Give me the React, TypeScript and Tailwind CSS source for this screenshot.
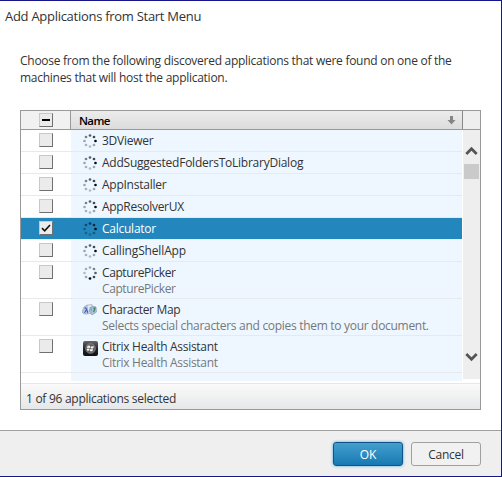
type IconKind = 'spinner' | 'charmap' | 'citrix';

interface AppRow {
  name: string;
  detail?: string;
  icon: IconKind;
  phase?: number;
  selected?: boolean;
  track: string;
  detailTrack?: string;
}

const rows: AppRow[] = [
  { name: '3DViewer', icon: 'spinner', track: 'tracking-[-0.25px]' },
  { name: 'AddSuggestedFoldersToLibraryDialog', icon: 'spinner', track: 'tracking-[-0.24px]' },
  { name: 'AppInstaller', icon: 'spinner', track: 'tracking-[-0.25px]' },
  { name: 'AppResolverUX', icon: 'spinner', track: 'tracking-[-0.3px]' },
  { name: 'Calculator', icon: 'spinner', selected: true, track: 'tracking-[-0.25px]' },
  { name: 'CallingShellApp', icon: 'spinner', track: 'tracking-[-0.15px]' },
  { name: 'CapturePicker', detail: 'CapturePicker', icon: 'spinner', phase: 2, track: 'tracking-[-0.4px]', detailTrack: 'tracking-[-0.4px]' },
  { name: 'Character Map', detail: 'Selects special characters and copies them to your document.', icon: 'charmap', track: 'tracking-[-0.35px]', detailTrack: 'tracking-[-0.3px]' },
  { name: 'Citrix Health Assistant', detail: 'Citrix Health Assistant', icon: 'citrix', track: 'tracking-[-0.3px]', detailTrack: 'tracking-[-0.3px]' },
];

const dots = [
  { x: 12.5, y: 7, o: 1 },
  { x: 11, y: 3, o: 0.75 },
  { x: 7, y: 1.5, o: 0.65 },
  { x: 3, y: 3, o: 0.5 },
  { x: 1.5, y: 7, o: 0.35 },
  { x: 3, y: 11, o: 0.3 },
  { x: 7, y: 12.5, o: 0.25 },
  { x: 11, y: 11, o: 0.35 },
];

function Spinner({ phase = 0 }: { phase?: number }) {
  return (
    <svg width="14" height="14" viewBox="0 0 14 14">
      {dots.map((d, i) => (
        <circle key={i} cx={d.x} cy={d.y} r="1.35" fill="#050a14" opacity={dots[(i + phase) % 8].o} />
      ))}
    </svg>
  );
}

function CharMapIcon() {
  return (
    <svg className="mt-px" width="15" height="12" viewBox="0 0 15 12">
      <path d="M2 3 L5 1 L7 4 L6 10 L2 10 L0 8Z" fill="#b4c6dd" stroke="#92a5bf" strokeWidth=".6" />
      <path d="M5 1 L10 0.6 L11 8 L6 10Z" fill="#e0eaf5" stroke="#90a2bd" strokeWidth=".6" />
      <path d="M10 2 L14 3 L14.5 8 L10 11 L8 9Z" fill="#a9bfd6" stroke="#8497b3" strokeWidth=".6" />
      <path d="M2.5 4 L4 4 L5.8 8.8 M4.2 6 L2.6 8.8" stroke="#3345a8" strokeWidth="1" fill="none" />
      <path d="M7 8 L8.5 3 L9.5 7" stroke="#7c96c8" strokeWidth=".9" fill="none" />
      <path d="M11.2 4 L13 4 L11.6 8" stroke="#338a55" strokeWidth="1.2" fill="none" />
    </svg>
  );
}

function CitrixIcon() {
  return (
    <svg className="mt-px ml-px shrink-0" width="15" height="15" viewBox="0 0 15 15">
      <defs>
        <linearGradient id="tile" x1="0" y1="0" x2="0" y2="1">
          <stop offset="0" stopColor="#686868" />
          <stop offset=".5" stopColor="#262626" />
          <stop offset="1" stopColor="#111" />
        </linearGradient>
      </defs>
      <rect width="15" height="15" rx="2" fill="url(#tile)" />
      <circle cx="7.5" cy="7.5" r="4.8" fill="#5c5c5c" stroke="#999" strokeWidth=".7" />
      <path d="M4.5 5 Q6 4.2 7.2 4.9 L6.8 7 Q5.5 6.4 4 7Z M7.9 5.2 Q9.3 5.8 10.8 5.1 L10.3 7.2 Q8.8 7.9 7.5 7.2Z M3.9 7.7 Q5.3 7.1 6.6 7.8 L6.2 9.8 Q5 9.2 4 9.7Z M7.3 8 Q8.7 8.6 10.1 7.9 L9.6 10 Q8.2 10.7 6.9 10Z" fill="#f5f5f5" />
    </svg>
  );
}

function CheckBox({ state }: { state: 'off' | 'on' | 'mixed' }) {
  return (
    <span className="flex size-[14px] items-center justify-center border border-t-[#c9c9c9] border-r-[#707070] border-b-[#707070] border-l-[#c9c9c9] bg-[#ebebeb]">
      {state === 'mixed' && <span className="h-[2px] w-2 bg-black" />}
      {state === 'on' && (
        <svg width="10" height="10" viewBox="0 0 10 10">
          <path d="M1 5.2 L3.7 7.8 L9 2" fill="none" stroke="#111" strokeWidth="1.6" />
        </svg>
      )}
    </span>
  );
}

function Row({ row }: { row: AppRow }) {
  const size = row.detail ? 'h-[37px]' : 'h-[22px]';
  const tone = row.selected ? 'border-[#e9edf0] bg-[#2386bd] text-white' : 'border-[#e6eaed] text-[#333]';
  return (
    <div className={`flex border-b ${size} ${tone}`}>
      <div className="flex w-[50px] shrink-0 justify-center pt-[3px]">
        <CheckBox state={row.selected ? 'on' : 'off'} />
      </div>
      <div className={`flex grow ${row.selected ? '' : 'bg-[#eef7ff]'}`}>
        <div className="flex w-[31px] shrink-0 items-start justify-center pt-1 pl-[6px]">
          {row.icon === 'spinner' && <Spinner phase={row.phase} />}
          {row.icon === 'charmap' && <CharMapIcon />}
          {row.icon === 'citrix' && <CitrixIcon />}
        </div>
        <div className="pt-[3px] leading-4 whitespace-nowrap">
          <div><span className={row.track}>{row.name}</span></div>
          {row.detail && <div className="text-[#777]"><span className={row.detailTrack}>{row.detail}</span></div>}
        </div>
      </div>
    </div>
  );
}

export default function App() {
  return (
    <div className="flex h-[477px] w-[502px] flex-col border-t border-r border-b border-[#17178b] bg-white font-['Open_Sans','Noto_Sans',sans-serif] text-[12px] text-[#333]">
      <h1 className="h-[51px] pt-[5px] pl-[5px] text-[13px] leading-5 tracking-[-0.28px] whitespace-nowrap"><span>Add Applications from Start Menu</span></h1>
      <p className="h-[58px] pl-5 leading-[17px] tracking-[-0.27px] whitespace-nowrap">
        <span>Choose from the following discovered applications that were found on one of the</span><br />
        <span>machines that will host the application.</span>
      </p>
      <div className="ml-5 flex h-[300px] w-[461px] flex-col border border-[#999]">
        <div className="flex h-[19px] shrink-0 border-b border-[#999]">
          <div className="flex w-[50px] justify-center border-r border-[#999] bg-[#f1f1f1] pt-[2px]">
            <CheckBox state="mixed" />
          </div>
          <div className="flex w-[391px] items-center justify-between bg-linear-to-b from-[#ececec] to-[#dcdcdc] pr-[6px] pl-2">
            <span className="pt-px text-[11.5px] font-semibold tracking-[-0.65px] text-black">Name</span>
            <svg width="9" height="9" viewBox="0 0 9 9">
              <path d="M3 0H6V4H8.5L4.5 8.5L.5 4H3Z" fill="#858585" />
            </svg>
          </div>
          <div className="grow border-l border-[#888] bg-[#eee]" />
        </div>
        <div className="flex h-[253px] shrink-0">
          <div className="flex w-[441px] flex-col">
            {rows.map((row) => <Row key={row.name} row={row} />)}
            <div className="h-2 pl-[50px]"><div className="h-full bg-[#eef7ff]" /></div>
          </div>
          <div className="ml-px flex h-[249px] w-[17px] flex-col items-center bg-[#eee] pt-[16px]">
            <svg width="13" height="10" viewBox="0 0 13 10"><path d="M1.3 8 L6.5 2.7 L11.7 8" fill="none" stroke="#555" strokeWidth="2.7" /></svg>
            <div className="mt-[8px] h-[15px] w-[15px] bg-[#cacaca]" />
            <svg className="mt-auto mb-[17px]" width="13" height="10" viewBox="0 0 13 10"><path d="M1.3 2 L6.5 7.3 L11.7 2" fill="none" stroke="#555" strokeWidth="2.7" /></svg>
          </div>
        </div>
        <div className="grow border-t border-[#e5e7e9] bg-linear-to-b from-[#fafafa] to-[#e6e7e9] pt-[6px] pl-[5px] leading-[18px] tracking-[-0.28px]"><span>1 of 96 applications selected</span></div>
      </div>
      <div className="mt-5 flex grow items-start justify-end gap-[8px] border-t border-[#a0a0a0] bg-[#efefef] pt-[11px] pr-[20px]">
        <button className="h-6 w-[70px] rounded-[3px] border border-[#0e5488] bg-linear-to-b from-[#429fcd] to-[#1679b3] pt-[2px] text-white shadow-[0_0_3px_#4ca3d5]"><span>OK</span></button>
        <button className="h-6 w-[70px] rounded-[3px] border border-[#a0a0a0] bg-[#f1f1f1] pt-[2px] tracking-[-0.25px] text-[#333]"><span>Cancel</span></button>
      </div>
    </div>
  );
}
